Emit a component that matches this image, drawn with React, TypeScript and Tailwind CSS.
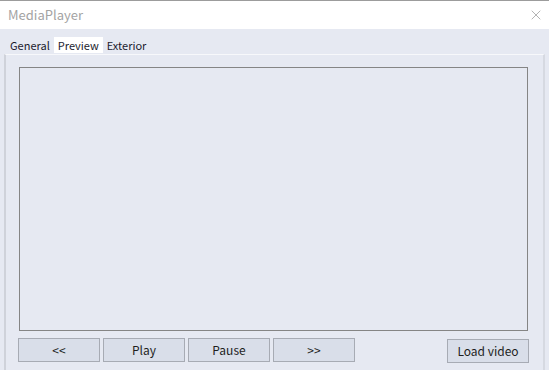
import { X } from "lucide-react";

const font = "font-['Noto_Sans_CJK_SC','Noto_Sans',sans-serif]";

const tabs = ["General", "Preview", "Exterior"];

const Btn = ({ label, w = "w-[82px]" }: { label: string; w?: string }) => (
  <button
    className={`${w} h-[24px] border border-[#a7abb4] bg-[#d9dee9] text-[12px] text-[#1e1e1e] leading-none`}
  >
    {label}
  </button>
);

const App = () => {
  return (
    <div
      className={`w-[549px] h-[370px] overflow-hidden bg-[#e6e9f2] flex flex-col ${font}`}
    >
      {/* title bar */}
      <div className="h-px bg-[#9c9c9c]" />
      <div className="h-[28px] bg-white flex items-center justify-between pl-[8px] pr-[5px]">
        <span className="text-[13px] text-[#a3a3a3]">MediaPlayer</span>
        <X size={16} strokeWidth={1} className="text-[#8c8c8c]" />
      </div>

      {/* tabs */}
      <div className="flex pl-[6px] pt-[8px] h-[25px]">
        {tabs.map((t) => (
          <div
            key={t}
            className={`px-[4px] h-[16px] flex items-center text-[11px] text-[#1b1b2e] ${
              t === "Preview" ? "bg-white" : ""
            }`}
          >
            {t}
          </div>
        ))}
      </div>

      {/* tab panel */}
      <div className="flex-1 mx-[4px] border-l-2 border-r-2 border-t border-l-[#cfd2da] border-r-[#d6d9e1] border-t-[#f7f8fb] pl-[13px] pr-[15px] pt-[12px] flex flex-col">
        <div className="h-[264px] border border-[#858585] bg-[#e6e9f2]" />
        <div className="flex items-center mt-[6px] -mx-px">
          <div className="flex gap-[3px]">
            <Btn label="<<" />
            <Btn label="Play" />
            <Btn label="Pause" />
            <Btn label=">>" />
          </div>
          <div className="ml-auto">
            <Btn label="Load video" />
          </div>
        </div>
      </div>
    </div>
  );
};

export default App;
